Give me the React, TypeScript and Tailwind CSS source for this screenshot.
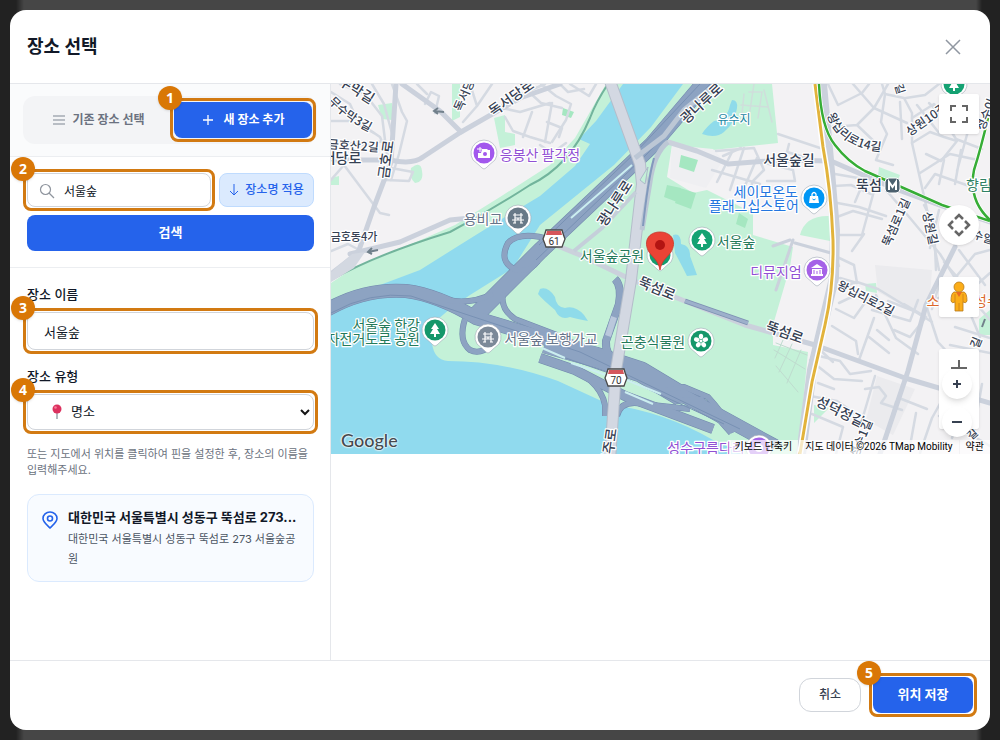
import React, { useState } from 'react';

const FONT = "font-['Inter','Noto_Sans_CJK_KR',sans-serif]";

interface StepProps {
  step: number;
  className?: string;
  children: React.ReactNode;
}

// Orange guide frame with a numbered badge
const Step: React.FC<StepProps> = ({ step, className = '', children }) => (
  <div className={`relative ${className}`}>
    {children}
    <div className="pointer-events-none absolute -inset-1 rounded-lg border-3 border-[#d27a12]" />
    <span className="pointer-events-none absolute -left-4 -top-4 flex h-6 w-6 items-center justify-center rounded-full bg-[#d97706] font-['Noto_Sans',sans-serif] text-sm font-bold text-white shadow">
      {step}
    </span>
  </div>
);

interface MapLabel {
  text: string;
  x: number;
  y: number;
  rotate?: number;
  size?: number;
  color?: string;
  anchor?: 'start' | 'middle' | 'end';
}

const STREET = '#364153';

const labels: MapLabel[] = [
  { text: '수막길', x: 354, y: 94, rotate: 32 },
  { text: '금호산2길', x: 353, y: 150, rotate: 4, size: 12 },
  { text: '서당로', x: 342, y: 163 },
  { text: '금호로', x: 391, y: 160, rotate: -82 },
  { text: '독서당', x: 468, y: 97, rotate: -66, size: 12 },
  { text: '독서당로', x: 514, y: 102, rotate: -35 },
  { text: '금호동4가', x: 354, y: 241, size: 11 },
  { text: '광나루로', x: 705, y: 107, rotate: -43 },
  { text: '광나루로', x: 619, y: 206, rotate: -57 },
  { text: '서울숲길', x: 789, y: 165 },
  { text: '뚝섬', x: 869, y: 190 },
  { text: '상원10길', x: 929, y: 123, rotate: -35, size: 12 },
  { text: '길', x: 896, y: 90, rotate: 72, size: 11 },
  { text: '성수이', x: 990, y: 116, rotate: -68, size: 12 },
  { text: '뚝섬로1길', x: 900, y: 224, rotate: -66, size: 12 },
  { text: '상원길', x: 926, y: 229, rotate: 78, size: 12 },
  { text: '수일', x: 982, y: 241, rotate: 18, size: 11 },
  { text: '왕십리로2길', x: 864, y: 302, rotate: 27, size: 12 },
  { text: '뚝섬로', x: 655, y: 293, rotate: 23 },
  { text: '뚝섬로', x: 783, y: 337, rotate: 20 },
  { text: '성덕정길', x: 838, y: 416, rotate: 26 },
  { text: '성수1길', x: 865, y: 440, rotate: -67, size: 12 },
  { text: '길', x: 980, y: 344, rotate: -68, size: 12 },
  { text: '길', x: 975, y: 437, rotate: -42, size: 11 },
  { text: '성주로', x: 614, y: 448, rotate: -82 },
  { text: '응봉산 팔각정', x: 540, y: 160, color: '#9150d4' },
  { text: '디뮤지엄', x: 776, y: 277, color: '#9150d4' },
  { text: '성수구름다리', x: 706, y: 453, color: '#9150d4' },
  { text: '용비교', x: 483, y: 224, color: '#66758a' },
  { text: '서울숲 보행가교', x: 551, y: 344, color: '#66758a' },
  { text: '서울숲공원', x: 612, y: 261, color: '#247a5a' },
  { text: '서울숲', x: 736, y: 247, color: '#247a5a' },
  { text: '서울숲 한강', x: 420, y: 330, color: '#247a5a', anchor: 'end' },
  { text: '자전거도로 공원', x: 420, y: 344, color: '#247a5a', anchor: 'end' },
  { text: '곤충식물원', x: 653, y: 347, color: '#247a5a' },
  { text: '유수지', x: 734, y: 124, size: 12, color: '#1b86a3' },
  { text: '세이모온도', x: 798, y: 197, color: '#2376df', anchor: 'end' },
  { text: '플래그십스토어', x: 799, y: 211, color: '#2376df', anchor: 'end' },
  { text: '향림', x: 979, y: 190, color: '#2f8264' },
  { text: '소', x: 933, y: 306, color: '#dc682c' },
  { text: '성수', x: 987, y: 306, color: '#dc682c' },
];

const minorRoads = [
  'M331 92 L350 104 L358 122 L380 137 L391 162',
  'M340 84 L365 94 L382 116 L386 148',
  'M372 84 L384 104 L393 137',
  'M392 84 L402 112 L407 121 L399 154 L391 180',
  'M331 121 L352 121 L374 133 M331 140 L362 145 L384 141',
  'M331 180 L344 165 L380 213 L389 215',
  'M391 168 L413 172 L409 181 L386 180',
  'M331 251 L348 244 L363 252',
  'M417 84 L427 94 M425 104 L431 92 L439 96 L435 113',
  'M463 122 L477 106 L470 84 M477 106 L492 84',
  'M494 112 L510 99 L545 84 M497 107 L520 112 L550 103',
  'M505 117 L513 131 L530 137 L550 143 M532 112 L523 137 M552 103 L545 142',
  'M529 92 L541 103 L562 108 M541 84 L556 96 L571 104 L566 120 L552 142',
  'M540 145 L552 153 L566 143 M560 84 L568 92 L584 89',
  'M547 122 L562 128 L559 137 M570 84 L589 96 L596 84',
  'M732 152 L717 182 M744 148 L730 190 M757 158 L741 195 M712 170 L760 184',
  'M716 151 L754 148 L764 170 L753 181 L748 195',
  'M723 156 L741 148 M765 163 L793 170 L795 181 L767 181',
  'M828 84 L838 105 L862 93 L869 84 M853 84 L874 108 L888 84',
  'M832 127 L857 125 L874 108 L907 123 M857 125 L880 147',
  'M882 84 L885 94 L881 122 L887 134 L876 160 L893 165',
  'M885 94 L904 98 L912 113 L912 143 L926 205 L939 270',
  'M900 102 L902 139 M906 98 L925 95 L939 84 M917 105 L939 133',
  'M912 118 L934 104 L956 139 L982 149 M929 103 L953 126',
  'M912 143 L930 132 L944 137 L957 141 L941 161 L926 154',
  'M920 173 L950 154 L978 160 M925 188 L935 174 L972 187',
  'M944 160 L939 184 M961 150 L955 184 M968 131 L957 171',
  'M778 134 L820 148 M789 144 L787 152 L814 160',
  'M835 174 L858 178 L881 190 M834 186 L851 185 L871 194',
  'M832 202 L859 207 L886 216 M837 217 L853 211 L882 219',
  'M833 235 L862 235 L874 191 M855 202 L866 176 M864 234 L852 251',
  'M886 190 L910 218 L940 254 L957 281 L990 320',
  'M924 205 L934 225 L936 270 M939 210 L930 248',
  'M839 266 L835 256 L854 265 L857 283 L840 278',
  'M835 289 L857 282 L878 289 L932 322 M862 292 L839 303',
  'M836 309 L854 318 L869 297 M832 326 L856 341 L858 354',
  'M872 310 L910 321 L918 300 M876 295 L896 338 L918 354',
  'M904 304 L926 317 L910 337 L894 330 M874 318 L859 360',
  'M877 330 L889 340 M869 337 L889 353 M888 301 L914 311',
  'M815 355 L840 361 L850 374 L871 371',
  'M875 376 L862 420 M865 389 L879 387 L886 396 L881 403 L902 410',
  'M899 398 L927 409 M896 402 L888 430 M916 413 L910 446',
  'M810 360 L834 379 L862 381 M817 347 L833 362 M818 383 L834 389',
  'M926 305 L938 342 L951 356 M939 281 L970 313 L980 337',
  'M944 262 L980 303 M959 250 L985 285 M950 284 L975 254 L990 250',
  'M973 288 L990 273 M938 298 L963 302 M955 327 L990 338',
  'M941 278 L932 309 M950 345 L990 353 M952 382 L932 418 L920 453',
  'M939 416 L990 446 M965 401 L952 438 M982 384 L974 430',
  'M805 395 L837 401 L860 417 M812 414 L843 427 L836 454',
];

const Pin: React.FC<{ x: number; y: number; color: string; children: React.ReactNode }> = ({ x, y, color, children }) => (
  <g transform={`translate(${x} ${y})`}>
    <path d="M-11 7 Q-6 11 -2 15 Q0 17 2 15 Q6 11 11 7 A13 13 0 1 0 -11 7Z" fill="#fff" stroke="#9ea7b3" strokeWidth=".6" />
    <circle r="10.5" fill={color} />
    {children}
  </g>
);

const Tree = () => <path d="M0 -7 L-4 -1 H-2 L-5 4 H-1 V7 H1 V4 H5 L2 -1 H4Z" fill="#fff" />;

const Bridge = () => (
  <path d="M-3 -5 V5 M3 -5 V5 M-5 -3 H5 M-3 0 H3 M-6 2 H6 M-5 5 H-2 M2 5 H5 M0 0 V2" fill="none" stroke="#fff" strokeWidth="1.2" />
);

const Shield: React.FC<{ x: number; y: number; value: string }> = ({ x, y, value }) => (
  <g transform={`translate(${x} ${y})`}>
    <path d="M-8 -9 H8 Q9 -5 11 0 Q9 5 8 8 H-8 Q-9 5 -11 0 Q-9 -5 -8 -9Z" fill="#fff" stroke="#484848" strokeWidth="1.3" />
    <path d="M-7 -8 H7 L8 -4 H-8Z" fill="#d5565b" />
    <text y="6" textAnchor="middle" fontSize="10" fill="#333" className="font-['Roboto',sans-serif]">{value}</text>
  </g>
);

const CityMap = () => (
  <svg
    viewBox="331 84 659 370"
    preserveAspectRatio="xMidYMid slice"
    className="block h-full w-full font-['Noto_Sans_CJK_KR',sans-serif]"
    role="img"
    aria-label="지도"
  >
    <rect x="331" y="84" width="659" height="370" fill="#f3f2f4" />

    {/* parks */}
    <g fill="#c4f1d8">
      <path d="M606 84 H772 L778 143 L713 150 L672 145 L667 177 L693 193 L707 190 L753 213 L753 235 L793 247 L790 267 L773 325 V345 L808 352 L798 454 H331 V283 L352 269 L400 249 L455 225 L500 197 L550 165 L575 138Z" />
      <path d="M452 84 H460 V117 L452 121Z M378 105 L392 103 V120 L382 119Z M411 168 Q421 160 422 171 Q424 182 415 183 Q409 178 411 168Z" />
      <path d="M494 118 L505 115 V132 L515 134 V145 L500 148Z M331 178 L339 176 V185 H331Z" />
      <path d="M800 235 Q805 215 830 216 V241Z M879 167 L900 175 L896 185 L878 176Z M865 284 L876 283 L877 293 L866 291Z" />
      <path d="M814 405 L829 408 L814 423Z M979 319 L990 310 V335 H979Z" />
    </g>
    <path d="M672 145 L713 149 L723 160 L706 188 L670 178Z" fill="#efeff2" />
    <path d="M875 265 L932 270 L928 320 L878 292Z M877 376 L915 389 L893 435 L866 420Z" fill="#ebebee" />
    <g fill="#a5e7c1">
      <path d="M681 155 L698 160 L694 172 L679 167Z M667 185 L681 188 L677 202 L664 197Z M680 188 L696 193 L691 209 L675 203Z" />
      <path d="M739 213 L748 219 L745 228 L736 224Z M563 108 L574 112 L571 118 L562 115Z" />
    </g>

    {/* river and ponds */}
    <path d="M623 84 H683 L651 127 L614 165 L540 225 L513 268 L470 295 L451 308 L437 320 L432 343 Q434 360 448 361 Q502 361 558 381 L608 404 Q665 412 713 440 L745 454 H331 V305 L380 285 L420 270 L463 243 L500 220 L540 196 L575 166 L590 144 L579 139 L596 121Z" fill="#90daee" />
    <g fill="#8fdbea">
      <path d="M732 100 Q738 100 737 108 Q735 123 724 132 Q716 139 702 134 Q706 127 714 121 Q727 120 730 105Z" />
      <path d="M540 289 Q548 286 555 297 Q556 307 565 308 Q575 305 584 315 L588 321 Q577 319 570 317 Q560 321 555 310 Q542 299 538 294Z" />
      <path d="M673 235 Q681 232 681 244 Q691 246 690 256 L697 275 L687 276 Q679 260 675 253Z" />
    </g>
    <path d="M331 280 Q375 255 450 232 Q490 211 530 185 Q570 166 590 118 Q596 102 608 84" fill="none" stroke="#72b49c" strokeWidth="2" />

    {/* streets */}
    <g fill="none" strokeLinejoin="round" strokeLinecap="round">
      {minorRoads.map(d => <path key={d} d={d} stroke="#d5dae2" strokeWidth="2.5" />)}
      <path d="M749 92 L762 92 L758 118 M754 84 L749 117 M741 105 L768 107 M744 94 L742 114 M764 90 L772 122" stroke="#cfdedb" strokeWidth="1.5" />
      <path d="M776 343 L807 355 M774 350 L805 369 M776 366 L798 392 M783 340 L775 358 M792 344 L779 372 M801 350 L787 383" stroke="#bfdccf" strokeWidth="1" />
      <g stroke="#cbd1dc" strokeWidth="5">
        <path d="M402 84 L440 111 L461 132 L520 98 L560 84" />
        <path d="M461 132 L423 157 Q413 165 390 160 L331 160" />
        <path d="M396 84 L391 162 L374 207 L358 253 L331 274" />
        <path d="M350 254 L400 242 L450 220 L470 218" />
        <path d="M548 242 L580 255 L632 280 L745 325 L815 345 L905 378 L990 403" />
        <path d="M668 142 L697 151 L728 164 L780 160 L831 161 L893 188 L942 206 L990 222" />
        <path d="M955 247 L926 305 L908 371 L880 454" />
        <path d="M822 84 L829 160 L835 230 L834 278 L812 370 L801 454" strokeWidth="10" />
        <path d="M793 240 L776 290 M773 246 L790 240 M795 243 L831 253" strokeWidth="3" />
      </g>
      <path d="M331 272 L352 254 L365 252 L354 268 L331 282" fill="#d3d8e1" />
    </g>

    {/* expressways: darker casing under a lighter fill */}
    {[
      { color: '#7189ad', extra: 1 },
      { color: '#8da3c2', extra: 0 },
    ].map(({ color, extra }) => (
      <g key={color} fill="none" stroke={color} strokeLinejoin="round">
        <path d="M714 72 L652 145 L540 251 L473 318" strokeWidth={16 + extra} />
        <path d="M325 311 Q363 288 406 291 Q438 295 476 318 L580 349 L660 383 L775 446" strokeWidth={13 + extra} />
        <path d="M545 343 L595 357 L641 372 L681 396" strokeWidth={20 + extra} />
        <path d="M552 240 Q520 230 508 243 Q498 262 516 270 Q529 273 538 261" strokeWidth={5 + extra} />
        <path d="M465 319 Q458 341 470 350 Q480 355 492 345" strokeWidth={5 + extra} />
        <path d="M448 300 Q469 305 493 294 M503 293 Q500 309 515 319 L557 335" strokeWidth={5 + extra} />
        <path d="M615 279 Q622 286 619 304 L606 341 Q605 354 616 363" strokeWidth={7 + extra} />
        <path d="M557 362 Q600 378 605 405 L605 416 M617 416 Q621 399 643 404 L690 409" strokeWidth={5 + extra} />
        <path d="M660 391 L684 387 L708 397 Q721 411 734 432 M675 401 L701 399 L731 433" strokeWidth={5 + extra} />
        <path d="M540 358 L575 370 L625 396 L713 429" strokeWidth={9 + extra} />
      </g>
    ))}
    <g fill="none" stroke="#7891b4" strokeWidth="1">
      <path d="M710 84 L648 153 L536 260 M700 84 L637 151 L539 245" />
      <path d="M331 313 Q370 291 411 296 L468 315 L580 352 L740 429" />
      <path d="M560 356 L626 379 L724 424" />
    </g>
    <path d="M542 348 L565 358 M571 363 L606 375 M624 379 L661 394 M625 392 L653 404 M571 218 L632 165" fill="none" stroke="#cbeef0" strokeWidth="2" />

    {/* 광나루로 */}
    <g fill="none" strokeLinejoin="round">
      <path d="M606 70 L640 164 L642 184 L631 280 L616 370 L610 460" stroke="#b4bdca" strokeWidth="12" />
      <path d="M606 70 L640 164 L642 184 L631 280 L616 370 L610 460" stroke="#d3d8e2" strokeWidth="10" />
      <path d="M635 158 L664 136 L684 110 L716 84 M668 142 Q654 153 650 182 L642 230" stroke="#bcc7d5" strokeWidth="5" />
      <path d="M636 192 L602 228 L574 251" stroke="#c5cfda" strokeWidth="4" />
      <path d="M654 158 Q648 180 643 226" stroke="#8299bc" strokeWidth="2" />
      <path d="M640 180 L648 167 L645 184Z" fill="#c4f1d8" stroke="#acbac9" />
      <path d="M685 301 L748 323" stroke="#7d91b3" strokeWidth="5" />
      <path d="M685 301 L748 323" stroke="#9db0cb" strokeWidth="3" />
      <path d="M614 317 L608 336" stroke="#bac8dc" strokeWidth="6" />
    </g>
    <path d="M444 112 L434 111 M438 108 L434 111 L438 114 M378 250 L368 252 M372 248 L368 252 L372 254 M982 327 L985 319" fill="none" stroke="#71808b" strokeWidth="2" />

    {/* subway lines */}
    <g fill="none">
      <path d="M815 84 L823 147 Q831 190 833 240 Q834 286 825 325 L812 382 L800 454" stroke="#fff" strokeWidth="6" />
      <path d="M815 84 L823 147 Q831 190 833 240 Q834 286 825 325 L812 382 L800 454" stroke="#e2b33b" strokeWidth="3" />
      <path d="M819 84 Q821 128 835 145 Q848 162 865 171 L942 205 L990 221 M988 118 Q981 148 974 170 Q968 200 990 220" stroke="#fff" strokeWidth="4" />
      <path d="M819 84 Q821 128 835 145 Q848 162 865 171 L942 205 L990 221 M988 118 Q981 148 974 170 Q968 200 990 220" stroke="#36ad36" strokeWidth="2.5" />
    </g>

    <defs>
      <path id="street-a" d="M328 102 Q347 122 372 133" />
      <path id="street-b" d="M827 115 Q840 151 890 152" />
    </defs>
    <g fill={STREET} stroke="#fff" strokeWidth="2.5" strokeLinejoin="round" paintOrder="stroke">
      <text fontSize="12" fontWeight="500"><textPath href="#street-a">무수막3길</textPath></text>
      <text fontSize="12" fontWeight="500"><textPath href="#street-b">왕십리로14길</textPath></text>
      {labels.map(({ text, x, y, rotate = 0, size = 14, color = STREET, anchor = 'middle' }) => (
        <text
          key={`${text}-${x}`}
          x={x}
          y={y}
          fontSize={size}
          fontWeight={color === STREET ? 500 : 400}
          fill={color}
          textAnchor={anchor}
          transform={`rotate(${rotate} ${x} ${y})`}
        >
          {text}
        </text>
      ))}
    </g>

    <Shield x={554} y={239} value="61" />
    <Shield x={616} y={378} value="70" />
    <g>
      <rect x="885" y="178" width="15" height="15" rx="4" fill="#4b606e" stroke="#fff" />
      <path d="M889 190 V182 L892.5 187 L896 182 V190" fill="none" stroke="#fff" strokeWidth="2" />
    </g>

    <Pin x={484} y={153} color="#a258ed">
      <path d="M-2 -4 H3 L4 -3 H6 V5 H-6 V0 H-3Z" fill="#fff" />
      <circle cx="1" cy="1" r="2" fill="#a258ed" />
      <path d="M-4 -6 V-1 M-7 -4 H-2" stroke="#fff" strokeWidth="1" />
    </Pin>
    <Pin x={518} y={218} color="#687987"><Bridge /></Pin>
    <Pin x={488} y={337} color="#7c8998"><Bridge /></Pin>
    <Pin x={435} y={330} color="#15976a"><Tree /></Pin>
    <Pin x={702} y={240} color="#15a273"><Tree /></Pin>
    <Pin x={954} y={84} color="#15a273"><Tree /></Pin>
    <Pin x={660} y={255} color="#159c6e"><Tree /></Pin>
    <Pin x={701} y={341} color="#15976a">
      {[0, 72, 144, 216, 288].map(a => <ellipse key={a} cy="-4.5" rx="2.2" ry="2.8" fill="#fff" transform={`rotate(${a})`} />)}
      <circle r="1.5" fill="#fff" />
    </Pin>
    <Pin x={814} y={198} color="#0096f5">
      <path d="M-4 -2 H4 L5 5 H-5Z" fill="#fff" />
      <path d="M-2 -2 V-4 Q0 -7 2 -4 V-2" fill="none" stroke="#fff" strokeWidth="1.3" />
      <path d="M-1.5 1 Q0 3 1.5 1" fill="none" stroke="#0096f5" />
    </Pin>
    <Pin x={817} y={270} color="#a562e7">
      <path d="M-6 -2 L0 -6 L6 -2Z M-5 -1 H5 V4 H6 V6 H-6 V4 H-5Z" fill="#fff" />
      <path d="M-3 0 V4 M0 1 V4 M3 0 V4" stroke="#a562e7" />
    </Pin>
    <Pin x={759} y={448} color="#a562e7"><circle r="4" fill="#fff" /></Pin>

    {/* selected place */}
    <path d="M660 270 C658 260 654 259 649 252 C643 242 648 232 660 232 C672 232 677 242 671 252 C666 259 662 260 660 270Z" fill="#ea4335" stroke="#c7352b" strokeWidth=".8" />
    <circle cx="660" cy="245" r="5" fill="#b31412" />
  </svg>
);

const MapPane = () => (
  <div className="relative h-[370px] overflow-hidden">
    <CityMap />
    <span className="absolute bottom-0.5 left-2.5 font-['Lato',sans-serif] text-lg font-medium leading-6 text-[#444a50] [text-shadow:0_0_2px_#fff,0_0_2px_#fff,0_0_2px_#fff]">Google</span>
    <div className="absolute bottom-0 right-0 flex h-3.5 items-center gap-px font-['Roboto','Noto_Sans_CJK_KR',sans-serif] text-[10px] leading-[14px] text-black">
      <button type="button" className="bg-white/70 px-1.5">키보드 단축키</button>
      <span className="bg-white/70 px-1.5">지도 데이터 ©2026 TMap Mobility</span>
      <a href="#terms" className="bg-white/70 px-1.5">약관</a>
    </div>
    <button type="button" aria-label="전체 화면" className="absolute right-[11px] top-2.5 flex h-10 w-10 items-center justify-center rounded-xs bg-white shadow">
      <svg width="18" height="18" viewBox="0 0 18 18" fill="none" stroke="#666" strokeWidth="2">
        <path d="M1 6V1H6M12 1H17V6M17 12V17H12M6 17H1V12" />
      </svg>
    </button>
    <button type="button" aria-label="지도 이동" className="absolute right-[11px] top-[121px] flex h-10 w-10 items-center justify-center rounded-full bg-white shadow">
      <svg width="24" height="24" viewBox="0 0 24 24" fill="none" stroke="#666" strokeWidth="2.5">
        <path d="M8 6 12 2 16 6M8 18 12 22 16 18M6 8 2 12 6 16M18 8 22 12 18 16" />
      </svg>
    </button>
    <button type="button" aria-label="스트리트 뷰" className="absolute right-[11px] top-[193px] flex h-10 w-10 items-center justify-center rounded-xs bg-white shadow">
      <svg width="20" height="32" viewBox="0 0 20 32">
        <path d="M5 11H15Q18 12 18 20Q17 23 14 21V30H6V21Q3 23 2 20Q2 12 5 11Z" fill="#fbad19" stroke="#b77a19" strokeWidth=".8" />
        <circle cx="10" cy="6" r="5" fill="#fbad19" stroke="#b77a19" strokeWidth=".8" />
        <path d="M7 11 10 16 13 11Z" fill="#e86b25" />
        <path d="M10 22V30M6 13V21M14 13V21" stroke="#c9821c" strokeWidth=".8" />
      </svg>
    </button>
    <div className="absolute right-[11px] top-[265px] h-20 w-10 rounded-xs bg-white shadow">
      <svg width="40" height="20" viewBox="0 0 40 20" fill="none" stroke="#666" strokeWidth="2">
        <path d="M20 11V19M12 19H28" />
      </svg>
    </div>
    <div className="absolute right-[18px] top-[285px] flex flex-col gap-2">
      <button type="button" aria-label="확대" className="flex h-[30px] w-[30px] items-center justify-center rounded-full bg-white shadow-md">
        <svg width="10" height="10" viewBox="0 0 10 10" stroke="#374151" strokeWidth="2"><path d="M5 1V9M1 5H9" /></svg>
      </button>
      <button type="button" aria-label="축소" className="flex h-[30px] w-[30px] items-center justify-center rounded-full bg-white shadow-md">
        <svg width="12" height="10" viewBox="0 0 12 10" stroke="#374151" strokeWidth="2"><path d="M1 5H11" /></svg>
      </button>
    </div>
  </div>
);

const App: React.FC = () => {
  const [query, setQuery] = useState('서울숲');
  const [name, setName] = useState('서울숲');

  return (
    <div className={`flex min-h-screen bg-[linear-gradient(90deg,#222_16px,#464646_24px,#464646_calc(100%-24px),#222_calc(100%-18px))] p-2.5 ${FONT}`}>
      <main className="flex min-w-0 flex-1 flex-col overflow-hidden rounded-2xl bg-white text-[#111827]">
        <header className="flex h-[74px] shrink-0 items-center justify-between border-b border-[#e5e7eb] pl-[17px] pr-7">
          <h1 className="text-lg font-bold">장소 선택</h1>
          <button type="button" aria-label="닫기">
            <svg width="18" height="18" viewBox="0 0 18 18" stroke="#9097a1" strokeWidth="1.5"><path d="M2 2 16 16M16 2 2 16" /></svg>
          </button>
        </header>

        <div className="flex flex-1">
          <aside className="w-[321px] shrink-0 border-r border-[#e5e7eb]">
            <div className="border-b border-[#eceef1] bg-[#fafbfc] px-[13px] py-3">
              <div className="flex h-12 items-center rounded-xl bg-[#f3f4f6] pr-[5px]">
                <button type="button" className="flex h-9 flex-1 items-center justify-center gap-2 text-xs font-bold text-[#6b7280]">
                  <svg width="12" height="12" viewBox="0 0 12 12" stroke="#a5abb4" strokeWidth="1.5"><path d="M0 2H12M0 6H12M0 10H12" /></svg>
                  기존 장소 선택
                </button>
                <Step step={1} className="w-[138px]">
                  <button type="button" className="flex h-9 w-full items-center justify-center gap-2.5 rounded-lg bg-[#2563eb] text-xs font-bold text-white">
                    <svg width="12" height="12" viewBox="0 0 12 12" stroke="#fff" strokeWidth="1.3"><path d="M6 1V11M1 6H11" /></svg>
                    새 장소 추가
                  </button>
                </Step>
              </div>
            </div>

            <div className="border-b border-[#eceef1] px-4 pb-4 pl-[17px] pt-4">
              <div className="flex gap-2">
                <Step step={2} className="min-w-0 flex-1">
                  <svg className="absolute left-3 top-2.5" width="16" height="16" viewBox="0 0 16 16" fill="none" stroke="#8e949d" strokeWidth="1.2">
                    <circle cx="6.5" cy="6.5" r="5" /><path d="M10 10 15 15" />
                  </svg>
                  <input
                    type="search"
                    aria-label="장소 검색"
                    value={query}
                    onChange={e => setQuery(e.target.value)}
                    className="block h-[34px] w-full rounded-lg border border-[#d1d5db] bg-white pl-9 pr-3 text-xs outline-none"
                  />
                </Step>
                <button type="button" className="flex h-[34px] w-[95px] items-center justify-center gap-1.5 rounded-lg border border-[#bfdbfe] bg-[#dbeafe] text-xs font-medium text-[#2563eb]">
                  <svg width="10" height="12" viewBox="0 0 10 12" fill="none" stroke="#2563eb"><path d="M5 0V11M1 7 5 11 9 7" /></svg>
                  장소명 적용
                </button>
              </div>
              <button type="button" className="mt-2 block h-9 w-full rounded-lg bg-[#2563eb] text-[13px] font-bold text-white">검색</button>
            </div>

            <div className="pb-4 pl-[17px] pr-4 pt-4">
              <label htmlFor="place-name" className="block text-[13px] font-medium leading-5">장소 이름</label>
              <Step step={3} className="mt-2">
                <input
                  id="place-name"
                  value={name}
                  onChange={e => setName(e.target.value)}
                  className="block h-[38px] w-full rounded-lg border border-[#d1d5db] px-4 text-[13px] outline-none"
                />
              </Step>
              <label htmlFor="place-type" className="mt-4 block text-[13px] font-medium leading-5">장소 유형</label>
              <Step step={4} className="mt-2">
                <select id="place-type" className="block h-9 w-full appearance-none rounded-lg border border-[#d1d5db] bg-white pl-[43px] text-[13px] outline-none">
                  <option>명소</option>
                </select>
                <svg className="pointer-events-none absolute left-6 top-2.5" width="12" height="16" viewBox="0 0 12 16">
                  <path d="M6 7V15" stroke="#98a1a9" strokeWidth="1.5" /><circle cx="6" cy="5" r="4.5" fill="#dc315f" /><circle cx="4.5" cy="3.5" r="1.3" fill="#f87998" />
                </svg>
                <svg className="pointer-events-none absolute right-1 top-3.5" width="10" height="8" viewBox="0 0 10 8" fill="none" stroke="#151515" strokeWidth="2"><path d="M1 2 5 6 9 2" /></svg>
              </Step>
              <p className="mt-4 text-[11px] leading-4 text-[#6b7280]">
                또는 지도에서 위치를 클릭하여 핀을 설정한 후, 장소의 이름을 입력해주세요.
              </p>
              <section className="mt-4 flex gap-2.5 rounded-xl border border-[#dbeafe] bg-[#f8fbff] p-3 pl-3.5 leading-5">
                <svg className="mt-1 shrink-0" width="16" height="18" viewBox="0 0 16 18" fill="none" stroke="#2563eb" strokeWidth="1.6">
                  <path d="M8 17C5 14 1 11 1 7.5A7 6.5 0 0 1 15 7.5C15 11 11 14 8 17Z" /><circle cx="8" cy="7.5" r="2.5" />
                </svg>
                <div className="min-w-0">
                  <h2 className="whitespace-nowrap text-[13px] font-bold">대한민국 서울특별시 성동구 뚝섬로 273...</h2>
                  <p className="mt-0.5 break-all text-[11px] text-[#4b5563]">대한민국 서울특별시 성동구 뚝섬로 273 서울숲공원</p>
                </div>
              </section>
            </div>
          </aside>

          <section className="min-w-0 flex-1">
            <MapPane />
          </section>
        </div>

        <footer className="flex h-[70px] shrink-0 items-center justify-end gap-3 border-t border-[#e5e7eb] pb-0.5 pr-[17px]">
          <button type="button" className="h-[34px] w-[62px] rounded-xl border border-[#d1d5db] text-xs font-medium text-[#374151]">취소</button>
          <Step step={5} className="w-[100px]">
            <button type="button" className="block h-9 w-full rounded-lg bg-[#2563eb] text-[13px] font-bold text-white">위치 저장</button>
          </Step>
        </footer>
      </main>
    </div>
  );
};

export default App;
